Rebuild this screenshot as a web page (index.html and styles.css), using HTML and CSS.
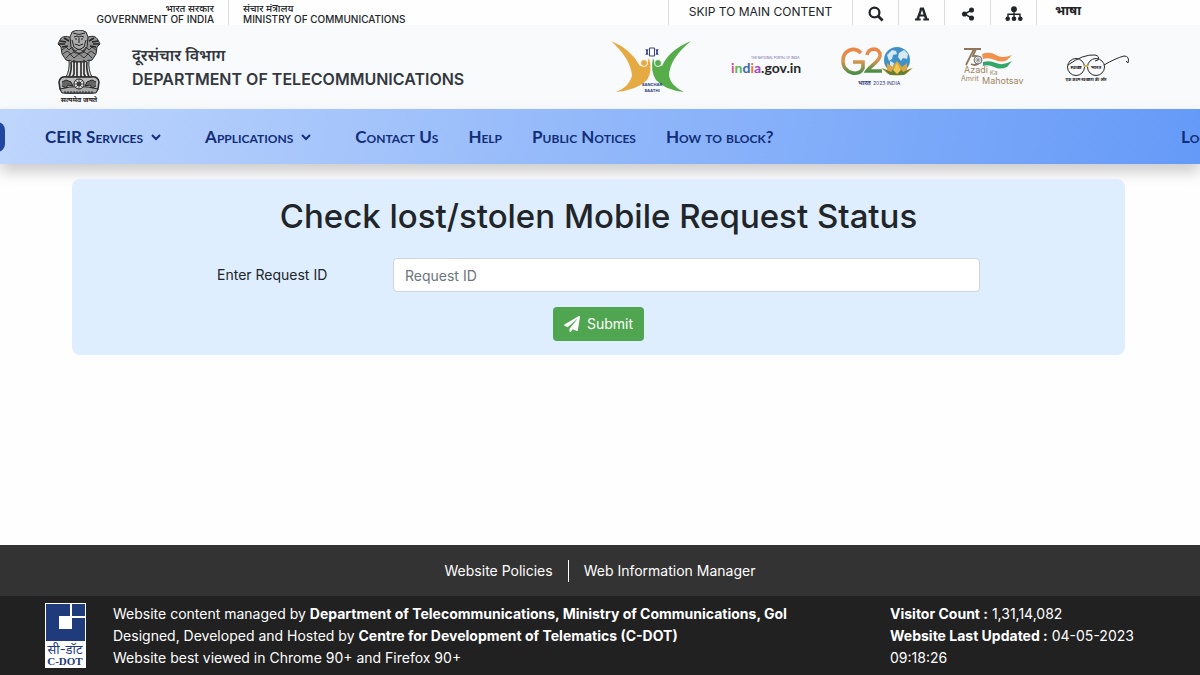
FILE: index.html
```html
<!DOCTYPE html>
<html lang="en">
<head>
<meta charset="utf-8">
<meta name="viewport" content="width=device-width, initial-scale=1">
<title>Check Request Status</title>
<link rel="stylesheet" href="styles.css">
</head>
<body>
<div class="topbar">
  <div class="gov gov-india"><span lang="hi">भारत सरकार</span><span>GOVERNMENT OF INDIA</span></div>
  <div class="gov gov-ministry"><span lang="hi">संचार मंत्रालय</span><span>MINISTRY OF COMMUNICATIONS</span></div>
  <div class="tools">
    <a class="skip" href="#main">SKIP TO MAIN CONTENT</a>
    <button class="tool" type="button" aria-label="Search"><svg width="16" height="16" viewBox="0 0 16 16"><circle cx="6.5" cy="6.5" r="4.9" fill="none" stroke="currentColor" stroke-width="2.3"/><path d="M10 10l4.600 4.600" stroke="currentColor" stroke-width="2.800"/></svg></button>
    <button class="tool" type="button" aria-label="Text size"><svg width="14" height="14" viewBox="0 0 14 14"><path fill="currentColor" fill-rule="evenodd" d="M5.300 0.500h3.500L12.500 11.500H14V13.500H8.300V11.500H9.800L9.200 9.500H4.800L4.200 11.500H5.700V13.500H0V11.500H1.500L4.800 2.500H4.200zM7 3L5.500 7.600h3z"/></svg></button>
    <button class="tool" type="button" aria-label="Share"><svg width="14" height="16" viewBox="0 0 16 16" fill="currentColor"><path d="M12 3.500L4 8l8 4.500" fill="none" stroke="currentColor" stroke-width="1.800"/><circle cx="12" cy="3.500" r="2.900"/><circle cx="4" cy="8" r="2.900"/><circle cx="12" cy="12.500" r="2.900"/></svg></button>
    <button class="tool" type="button" aria-label="Sitemap"><svg width="18" height="16" viewBox="0 0 18 16" fill="currentColor"><path d="M9 3v9M3 12V8.300h12V12" fill="none" stroke="currentColor" stroke-width="1.400"/><circle cx="9" cy="3.200" r="2.900"/><circle cx="2.700" cy="12.700" r="2.300"/><circle cx="9" cy="12.700" r="2.300"/><circle cx="15.300" cy="12.700" r="2.300"/></svg></button>
    <a class="language" href="#" lang="hi">भाषा</a>
  </div>
</div>

<header class="masthead">
  <svg class="emblem" width="44" height="74" viewBox="0 0 44 74" role="img" aria-label="State Emblem of India">
    <g stroke="#252525" stroke-width="1" fill="#929292">
      <path d="M15 8C8 5 4 7 3 10l-2 4 3 3 1 7 4 6 7 2h12l7-2 4-6 1-7 3-3-2-4c-2-4-6-5-12-2z"/>
      <path d="M15 2q7-4 14 0l2 5-1 10-4 6h-8l-4-6-1-10z" fill="#aaa"/>
      <path d="M17 7l3-1 2 1 2-1 3 1M18 9h2m4 0h2M22 8v5M18 14q4 3 8 0M16 3q6 3 12 0M15 10l2 7 5 3 5-3 2-7" fill="none"/>
      <path d="M3 11l6 1M2 14h6M5 17l6-1M7 8l5 3M41 11l-6 1M42 14h-6M39 17l-6-1M37 8l-5 3" fill="none" stroke-width="1.500"/>
      <path d="M5 20l4-3 3 3 3-3 3 4 4-2 4 2 3-4 3 3 3-3 4 3M6 24l4-3 4 3 4-3 4 3 4-3 4 3 4-3 4 3M9 28l4-4 4 4 5-4 5 4 4-4 4 4" fill="none" stroke="#333"/>
      <path d="M12 30q1 10-3 17h26q-4-7-3-17l-4 2H16z" fill="#e7e7e7"/>
      <path d="M14 32q1 8-2 15M17 30v14l-2 4M20 31v16M24 31v16M27 30v14l2 4M30 32q-1 8 2 15" fill="none" stroke="#333" stroke-width="1.700"/>
      <path d="M10 47Q3 46 2 52l1 7q2 4 7 4h24q5 0 7-4l1-7q-1-6-8-5z" fill="#bbb" stroke-width="1.500"/>
      <path d="M3 59q19-5 38 0l-2 4H5z" fill="#aaa"/>
      <path d="M5 52l4-2 5 2 2 4-5-1-2 3-4-2M39 52l-4-2-5 2-2 4 5-1 2 3 4-2" fill="#666"/>
      <circle cx="22" cy="54" r="5" fill="#ddd"/><circle cx="22" cy="54" r="2" fill="#888"/>
      <path d="M22 49v10M17 54h10M18 50l8 8M18 58l8-8" stroke-width=".6"/>
      <path d="M7 62h30" stroke-dasharray="2 1"/>
    </g>
    <text x="22" y="72" text-anchor="middle" font-size="7" font-weight="700" fill="#222">सत्यमेव जयते</text>
  </svg>
  <div class="department"><span class="department-hi" lang="hi">दूरसंचार विभाग</span><span class="department-en">DEPARTMENT OF TELECOMMUNICATIONS</span></div>
  <div class="partners">
    <svg width="80" height="52" viewBox="0 0 80 52" role="img" aria-label="Sanchar Saathi">
      <path d="M0 0Q20 8 29 25q7 0 9-8 4 13-2 22Q26 49 5 51q13-5 16-16Q20 18 0 0z" fill="#e6aa43"/>
      <path d="M80 0Q58 9 51 25q-7 0-9-8-3 13 3 22 9 10 28 12-13-6-15-16Q58 18 80 0z" fill="#56ad4a"/>
      <circle cx="33" cy="22" r="3.500" fill="#e6aa43" stroke="#f8fafb"/><circle cx="47" cy="22" r="3.500" fill="#56ad4a" stroke="#f8fafb"/>
      <path d="M38.500 7h5v8h-5zM37 8q-2 3 0 6M35 8l1 3-1 3M45 8q2 3 0 6M47 8l-1 3 1 3" fill="none" stroke="#343f8d"/>
      <g font-size="4" font-weight="700" fill="#27357f" text-anchor="middle"><text x="41" y="45">SANCHAR</text><text x="41" y="51">SAATHI</text></g>
    </svg>
    <svg width="70" height="22" viewBox="0 0 70 22" role="img" aria-label="india.gov.in">
      <text x="20" y="3" font-size="3" fill="#6455a5">THE NATIONAL PORTAL OF INDIA</text>
      <text class="india-wordmark" x="0" y="17" font-size="14"><tspan fill="#dc499b">i</tspan><tspan fill="#55b94c">n</tspan><tspan fill="#3d69ad">d</tspan><tspan fill="#ef782d">i</tspan><tspan fill="#a546cb">a</tspan><tspan fill="#282828">.gov.in</tspan></text>
    </svg>
    <svg class="g20" width="72" height="40" viewBox="0 0 72 40" role="img" aria-label="G20 India">
      <defs><linearGradient id="g20" x2="0" y2="1"><stop stop-color="#ed8548"/><stop offset=".5" stop-color="#d9944f"/><stop offset="1" stop-color="#4c8e46"/></linearGradient></defs>
      <g fill="none" stroke="url(#g20)" stroke-width="3.600"><path d="M20 6C13-1 2 3 2 14c0 13 17 16 20 7v-6H12"/><path d="M26 8c1-8 14-8 13 1-1 6-9 9-13 15h15"/></g>
      <circle cx="56" cy="13" r="13" fill="#3f91c7"/><path d="M46 8l5-5 4 1 1 3-4 1-1 4-3 2zM58 6l5-3 4 4-1 5-4-1-2 3-3-4zM49 14l4 2-1 5-3-3z" fill="#d8e8f3"/>
      <path d="M56 14l5 6 5-4v7l6-2-7 6q-9 3-18 0l-7-6 6 2v-7l5 4z" fill="#dda541"/><path d="M41 21l9 4 6-8 6 8 9-4-8 7H49z" fill="#607f35"/><path d="M56 16l4 7-4 4-4-4z" fill="#f2c951"/>
      <text x="17" y="38" font-size="6" font-weight="700" fill="#333d85">भारत</text><text x="32" y="38" font-size="5" fill="#333d85">2023 INDIA</text>
    </svg>
    <svg width="64" height="40" viewBox="0 0 64 40" role="img" aria-label="75 Azadi Ka Amrit Mahotsav">
      <path d="M3 2h10L5 18M20 2h-5l-3 7q7-1 7 5c-1 4-5 5-9 3" fill="none" stroke="#8e7759" stroke-width="1.800"/>
      <path d="M21 7q8-3 14 1t16 0l-5 5q-5 3-12 0t-12-1z" fill="#f1924c"/><path d="M22 15q7-2 13 1 7 3 16-2l-5 6q-7 3-13 0t-11-1z" fill="#36a76a"/>
      <circle cx="17" cy="13" r="4" fill="#eee" stroke="#777"/><path d="M17 9v8m-4-4h8m-7-3 6 6m0-6-6 6" stroke="#777" stroke-width=".6"/>
      <g font-size="9" fill="#a18462"><text x="3" y="26">Azadi</text><text x="29" y="28" font-size="6">Ka</text><text x="0" y="34" font-size="7">Amrit</text><text x="21" y="37">Mahotsav</text></g>
    </svg>
    <svg width="65" height="30" viewBox="0 0 65 30" role="img" aria-label="Swachh Bharat">
      <g fill="none" stroke="#292929"><circle cx="11" cy="15" r="8.500"/><circle cx="31" cy="15" r="8.500"/><path d="M3 13Q18 2 30 3q5 1 3 5l-3 1M39 13q12-7 20-9 6 0 4 7l-2-2"/><path d="M19 14h4" stroke="#ddb442" stroke-width="2"/></g>
      <g fill="#222" text-anchor="middle" font-size="5" font-weight="700"><text x="11" y="17">स्वच्छ</text><text x="31" y="17">भारत</text><text x="21" y="29" font-size="4">एक कदम स्वच्छता की ओर</text></g>
    </svg>
  </div>
</header>

<nav class="nav" aria-label="Main">
  <a class="home" href="#" aria-label="Home"></a>
  <a class="dropdown" href="#">CEIR Services<svg width="10" height="8" viewBox="0 0 10 8"><path d="M1 2l4 4 4-4" fill="none" stroke="currentColor" stroke-width="2"/></svg></a>
  <a class="dropdown" href="#">Applications<svg width="10" height="8" viewBox="0 0 10 8"><path d="M1 2l4 4 4-4" fill="none" stroke="currentColor" stroke-width="2"/></svg></a>
  <a href="#">Contact Us</a>
  <a href="#">Help</a>
  <a href="#">Public Notices</a>
  <a href="#">How to block?</a>
  <a class="login" href="#">Login</a>
</nav>

<main class="main" id="main">
  <form class="card">
    <h1>Check lost/stolen Mobile Request Status</h1>
    <div class="field"><label for="request-id">Enter Request ID</label><input id="request-id" type="text" placeholder="Request ID"></div>
    <button class="submit" type="submit"><svg width="16" height="16" viewBox="0 0 512 512" fill="currentColor"><path d="M476 3L12 271c-18 10-16 36 2 44l107 45L409 105c5-5 13 2 8 8L176 407v81c0 24 29 33 42 16l64-78 126 53c14 6 31-3 33-19L512 28c3-20-18-35-36-25z"/></svg>Submit</button>
  </form>
</main>

<footer>
  <div class="policies"><a href="#">Website Policies</a><a href="#">Web Information Manager</a></div>
  <div class="credits">
    <svg class="cdot" width="41" height="65" viewBox="0 0 41 65" role="img" aria-label="C-DOT">
      <path fill="#fff" d="M0 0h41v65H0z"/><path fill="#203b7c" d="M1 1h24v12H14v13h13V15h13v23H1zM27 1h13v12H27z"/>
      <g fill="#203b7c" text-anchor="middle"><text x="20" y="51" font-size="13">सी-डॉट</text><text class="cdot-latin" x="20" y="62" font-size="11" font-weight="700">C-DOT</text></g>
    </svg>
    <div class="managed"><p>Website content managed by <strong>Department of Telecommunications, Ministry of Communications, GoI</strong></p><p>Designed, Developed and Hosted by <strong>Centre for Development of Telematics (C-DOT)</strong></p><p>Website best viewed in Chrome 90+ and Firefox 90+</p></div>
    <div class="stats"><p><strong>Visitor Count :</strong> 1,31,14,082</p><p><strong>Website Last Updated :</strong> 04-05-2023 09:18:26</p></div>
  </div>
</footer>
</body>
</html>
```

FILE: styles.css
```css
* { box-sizing: border-box; }
body {
  margin: 0;
  min-height: 100vh;
  display: flex;
  flex-direction: column;
  background: #fefefe;
  color: #212529;
  font: 14px/22px Inter, "Noto Sans", sans-serif;
}
a { color: inherit; text-decoration: none; }
button, input { font: inherit; color: inherit; }
p, h1 { margin: 0; }
svg { flex: none; }

.topbar { display: flex; height: 25px; white-space: nowrap; }
.gov {
  display: flex;
  flex-direction: column;
  padding-top: 3px;
  font-size: 10px;
  line-height: 11px;
  font-weight: 500;
}
.gov-india { width: 229px; padding-right: 14px; text-align: right; border-right: 1px solid #ddd; }
.gov-ministry { padding-left: 14px; }
.tools { display: flex; margin-left: auto; padding-right: 119px; }
.skip { width: 184px; border-left: 1px solid #ddd; text-align: center; font-size: 12px; line-height: 24px; }
.tool {
  width: 46px;
  padding: 2px 0 0;
  border: 0;
  border-left: 1px solid #ddd;
  background: none;
  display: grid;
  place-items: center;
}
.language { padding-left: 18px; border-left: 1px solid #ddd; font-size: 13px; font-weight: 700; line-height: 21px; }

.masthead {
  display: flex;
  align-items: center;
  min-height: 84px;
  padding: 0 70px 0 57px;
  background: #f8fafb;
}
.department { display: flex; flex-direction: column; margin-left: 31px; color: #333840; font-weight: 600; line-height: 24px; white-space: nowrap; }
.department-hi, .department-en { font-size: 16px; }
.partners { display: flex; align-items: center; margin-left: auto; gap: 40px; }
.g20 { margin-right: 8px; }
.india-wordmark { font-family: Lato, sans-serif; font-weight: 700; }

.nav {
  display: flex;
  flex: none;
  align-items: center;
  gap: 30px;
  height: 55px;
  overflow: clip;
  background: linear-gradient(100deg, #bfd6fc, #659af8);
  box-shadow: 0 8px 14px #0003;
  color: #122e78;
  font-family: Lato, sans-serif;
  font-size: 17px;
  font-weight: 700;
  font-variant: small-caps;
  white-space: nowrap;
}
.home { width: 40px; height: 30px; margin: 0 10px 0 -35px; border-radius: 8px; background: #2148a0; flex: none; }
.dropdown { display: flex; align-items: center; gap: 8px; margin-right: 14px; }
.login { margin: 0 -21px 0 auto; }

.main { flex: 1; padding: 15px 75px 32px 72px; }
.card { position: relative; padding: 16px 145px 14px; border-radius: 8px; background: #deeefe; }
h1 { margin: 0 -72px 20px; text-align: center; font-size: 33px; line-height: 43px; font-weight: 500; }
.field { display: grid; grid-template-columns: 176px 1fr; align-items: center; }
.field input { width: 100%; height: 34px; padding: 0 11px; border: 1px solid #ced4da; border-radius: 4px; background: #fff; }
.field input::placeholder { color: #6c757d; opacity: 1; }
.submit {
  display: flex;
  align-items: center;
  gap: 7px;
  height: 34px;
  margin: 15px auto 0;
  padding: 0 11px;
  border: 0;
  border-radius: 4px;
  background: #50a550;
  color: #fff;
}

footer { color: #fff; }
.policies { display: flex; justify-content: center; align-items: center; height: 51px; background: #333; }
.policies a { padding: 0 15px; }
.policies a + a { border-left: 1px solid #fff; }
.credits { display: flex; min-height: 79px; padding: 7px 45px 6px; background: #212121; }
.managed { margin-left: 27px; }
.stats { width: 265px; margin-left: auto; }
.cdot-latin { font-family: "Liberation Serif", serif; }
```
